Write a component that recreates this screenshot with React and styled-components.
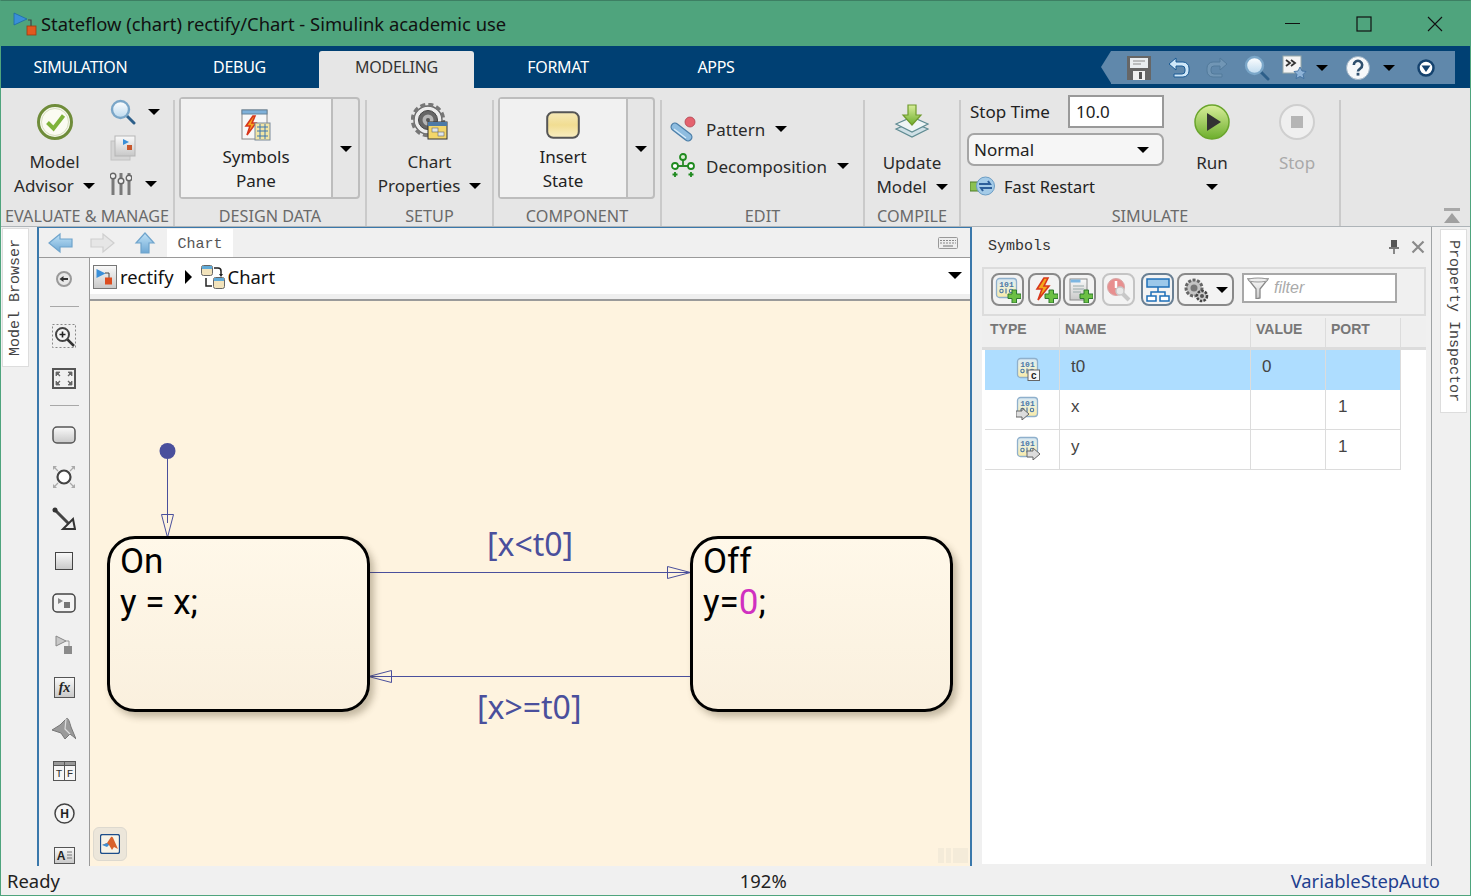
import React from 'react';
import styled, { createGlobalStyle } from 'styled-components';

const Global = createGlobalStyle`
  html, body { margin: 0; padding: 0; background: #f0f0f0; }
  * { box-sizing: border-box; }
  #root { width: 1471px; height: 896px; overflow: hidden; }
`;

const UI = `"Noto Sans", "Open Sans", sans-serif`;
const MONO = `"Liberation Mono", "DejaVu Sans Mono", monospace`;
const INK = '#4a4f9c';

const Win = styled.div`
  width: 1471px; height: 896px; display: flex; flex-direction: column;
  border: 1px solid #4fa47d; border-top-color: #3d7f63; background: #f0f0f0; font-family: ${UI}; color: #222; overflow: hidden;
`;
const TitleBar = styled.div`
  height: 45px; flex: none; background: #4fa47d; display: flex; align-items: center; padding-left: 12px;
`;
const TitleText = styled.div`
  margin-left: 4px; font-size: 18.4px; color: #111; white-space: nowrap; flex: 1;
`;
const WinButtons = styled.div`
  display: flex; align-items: center; gap: 55px; padding-right: 27px;
`;
const TabBar = styled.div`
  height: 42px; flex: none; background: #004073; display: flex; position: relative;
`;
const Tab = styled.div`
  width: ${p => p.$w}px; display: flex; align-items: center; justify-content: center;
  font-size: 16px; letter-spacing: -0.3px; color: ${p => (p.$active ? '#333' : '#fff')};
  background: ${p => (p.$active ? '#e6e6e6' : 'transparent')};
  margin-top: ${p => (p.$active ? 5 : 0)}px; padding-bottom: ${p => (p.$active ? 5 : 0)}px;
  border-radius: 3px 3px 0 0;
`;
const Quick = styled.div`
  position: absolute; left: 1110px; top: 5px; width: 344px; height: 33px; background: #6088ab;
  display: flex; align-items: center; padding-left: 16px;
  &::before {
    content: ''; position: absolute; left: -10px; top: 0; border-style: solid;
    border-width: 16.5px 10px 16.5px 0; border-color: transparent #6088ab transparent transparent;
  }
`;
const QuickSlot = styled.div`
  display: flex; align-items: center; margin-left: ${p => p.$ml || 0}px;
`;
const Ribbon = styled.div`
  height: 139px; flex: none; background: #e6e6e6; display: flex; border-bottom: 1px solid #aeb4b8;
`;
const Sep = styled.div`
  width: 2px; flex: none; margin-top: 12px; background: #cacaca;
`;
const Group = styled.div`
  width: ${p => p.$w}px; flex: none; display: flex; flex-direction: column;
`;
const GroupBody = styled.div`
  flex: 1; display: flex; min-height: 0;
`;
const GroupLabel = styled.div`
  height: 22px; flex: none; text-align: center; font-size: 16.2px; line-height: 25px; color: #6a6a6a; white-space: nowrap;
`;
const BigButton = styled.div`
  width: ${p => p.$w || 100}px; display: flex; flex-direction: column; align-items: center; padding-top: ${p => p.$pt || 16}px;
  margin-left: ${p => p.$ml || 0}px;
  color: ${p => (p.$off ? '#a9a9a9' : '#2a2a2a')};
`;
const IconSlot = styled.div`
  height: ${p => p.$h || 36}px; display: flex; align-items: center; justify-content: center; margin-bottom: ${p => p.$mb || 10}px;
`;
const BtnLine = styled.div`
  height: 24px; line-height: 24px; font-size: 17px; white-space: nowrap; display: flex; align-items: center; gap: ${p => p.$gap || 9}px;
`;
const Caret = styled.span`
  display: inline-block; flex: none; width: 0; height: 0; border-style: solid;
  border-width: 6px 6px 0 6px; border-color: #000 transparent transparent transparent;
`;
const BigCaret = styled(Caret)`
  border-width: 7px 7px 0 7px; margin-bottom: 3px;
`;
const SmallCol = styled.div`
  display: flex; flex-direction: column; padding: 11px 0 0 2px; gap: 11px;
`;
const SmallRow = styled.div`
  height: 25px; display: flex; align-items: center; gap: ${p => p.$gap || 12}px;
`;
const Split = styled.div`
  margin: 9px 0 0 4px; width: ${p => p.$w}px; height: 102px; border: 2px solid #bdbdbd; border-radius: 4px; display: flex;
`;
const SplitMain = styled.div`
  flex: 1; background: #f1f1f1; display: flex; flex-direction: column; align-items: center; padding-top: 11px;
`;
const SplitSide = styled.div`
  width: 27px; border-left: 2px solid #bdbdbd; display: flex; align-items: center; justify-content: center; padding-top: 2px;
`;
const EditCol = styled.div`
  display: flex; flex-direction: column; padding: 23px 0 0 8px; gap: 1px;
`;
const EditRow = styled.div`
  height: 36px; display: flex; align-items: center; font-size: 17px; gap: 10px; color: #2a2a2a;
`;
const SimLeft = styled.div`
  width: 203px; flex: none; padding: 7px 0 0 6px; display: flex; flex-direction: column;
`;
const StopRow = styled.div`
  display: flex; align-items: center; justify-content: space-between; height: 33px; padding-left: 3px; font-size: 17px;
`;
const StopInput = styled.div`
  width: 96px; height: 33px; background: #fff; border: 2px solid #999; font-size: 17px; line-height: 29px; padding-left: 6px;
`;
const ModeSelect = styled.div`
  margin-top: 5px; height: 33px; background: #f6f6f6; border: 2px solid #a5a5a5; border-radius: 7px; display: flex; align-items: center;
  justify-content: space-between; padding: 0 13px 0 5px; font-size: 17px;
`;
const FastRow = styled.div`
  margin-top: 7px; height: 26px; display: flex; align-items: center; padding-left: 3px; gap: 9px; font-size: 16.4px;
`;
const CollapseCell = styled.div`
  flex: 1; display: flex; justify-content: flex-end; align-items: flex-end; padding: 0 10px 2px 0;
`;

const Main = styled.div`
  flex: 1; min-height: 0; display: flex;
`;
const LeftStrip = styled.div`
  width: 36px; flex: none; background: #f0f0f0; padding: 1px 0 0 1px;
`;
const SideTab = styled.div`
  background: #fff; border: 1px solid #ddd; writing-mode: vertical-rl; font-family: ${MONO}; font-size: 15px; color: #444; white-space: nowrap;
  display: flex; align-items: center; justify-content: center;
  width: 27px; height: ${p => p.$h}px;
  ${p => (p.$flip ? 'transform: rotate(180deg);' : '')}
`;
const Editor = styled.div`
  width: 935px; flex: none; border: 2px solid #3a78ab; border-top-width: 1px; display: flex; flex-direction: column; height: 641px;
`;
const EditorTop = styled.div`
  height: 30px; flex: none; background: #f0f0f0; border-bottom: 1px solid #9a9a9a; display: flex; align-items: center; padding-left: 9px;
`;
const NavIcon = styled.div`
  width: ${p => p.$w}px; display: flex;
`;
const ChartTab = styled.div`
  height: 28px; width: 66px; margin-top: 1px; background: #fff; font-family: ${MONO}; font-size: 15px; color: #555; display: flex; align-items: center; justify-content: center; padding-top: 2px;
`;
const EditorBody = styled.div`
  flex: 1; min-height: 0; display: flex;
`;
const Palette = styled.div`
  width: 51px; flex: none; background: #f0f0f0; border-right: 1px solid #9a9a9a; overflow: hidden;
`;
const PalItem = styled.div`
  height: 42px; display: flex; align-items: center; justify-content: center;
`;
const PalDiv = styled.div`
  height: 1px; width: 29px; margin: 6px auto 8px; background: #a8a8a8;
`;
const ChartSide = styled.div`
  flex: 1; display: flex; flex-direction: column; min-width: 0;
`;
const Crumbs = styled.div`
  height: 43px; flex: none; background: #fff; border-bottom: 2px solid #9a9a9a; box-shadow: inset 0 -5px 0 #efefef; display: flex; align-items: center;
  padding: 0 8px 4px 3px; font-size: 18.4px; color: #111;
`;
const CrumbText = styled.span`
  margin: 0 ${p => p.$mr || 0}px 0 3px;
`;
const CrumbArrow = styled.span`
  width: 0; height: 0; border-style: solid; border-width: 7px 0 7px 7px; margin-right: 9px; border-color: transparent transparent transparent #000;
`;
const Spacer = styled.div` flex: 1; `;
const Canvas = styled.div`
  flex: 1; position: relative; background: #fef3df; overflow: hidden;
`;
const Wires = styled.svg`
  position: absolute; left: 0; top: 0; width: 100%; height: 100%;
`;
const State = styled.div`
  position: absolute; left: ${p => p.$x}px; top: ${p => p.$y}px; width: 263px; height: 176px;
  border: 3px solid #000; border-radius: 28px; background: linear-gradient(#fff8e9, #faf0de);
  box-shadow: 4px 5px 7px rgba(70, 60, 30, 0.32); padding: 0 0 0 10px;
  font-family: Roboto, "Noto Sans", sans-serif; font-size: 35px; line-height: 41px; color: #000;
`;
const StateTitle = styled.div` margin-top: 2px; `;
const Magenta = styled.span` color: #d030c0; `;
const Guard = styled.div`
  position: absolute; left: ${p => p.$x}px; top: ${p => p.$y}px; font-size: 32px; line-height: 44px; color: ${INK}; white-space: nowrap;
`;
const MlButton = styled.div`
  position: absolute; left: 3px; bottom: 5px; width: 34px; height: 34px; border-radius: 6px; background: #ece6da; border: 1px solid #ddd9cf;
  display: flex; align-items: center; justify-content: center;
`;
const ScrollHint = styled.div`
  position: absolute; right: 2px; bottom: 3px; display: flex; gap: 2px;
`;
const HintBar = styled.div`
  width: ${p => p.$w}px; height: 15px; background: #f4ebd9;
`;

const RightPanel = styled.div`
  width: 460px; flex: none; background: #f0f0f0; border-right: 1px solid #9fa3a5; display: flex; flex-direction: column; padding: 0 5px 2px 10px;
`;
const PanelHead = styled.div`
  height: 40px; flex: none; display: flex; align-items: center; padding: 0 1px 1px 6px; font-family: ${MONO}; font-size: 15px; color: #333;
`;
const PanelTitle = styled.div` flex: 1; `;
const PanelTools = styled.div` display: flex; align-items: center; gap: 12px; `;
const SymBar = styled.div`
  height: 49px; flex: none; border: 2px solid #dcdcdc; display: flex; align-items: flex-start; padding: 4px 0 0 7px;
`;
const SymBtn = styled.div`
  width: ${p => p.$w || 33}px; height: 33px; margin-left: ${p => p.$ml || 0}px; border: 2px solid ${p => p.$c || '#8a8a8a'}; border-radius: 8px; background: #f3f3f3;
  display: flex; align-items: center; justify-content: center; gap: 7px;
`;
const FilterBox = styled.div`
  width: 155px; height: 30px; margin-left: 8px; background: #fff; border: 2px solid #a8a8a8; display: flex; align-items: center; padding-left: 3px;
  font: italic 16px "Liberation Sans", sans-serif; color: #aaa; gap: 5px;
`;
const TableWrap = styled.div`
  flex: 1; min-height: 0; margin-top: 2px; background: #fff; display: flex; flex-direction: column;
`;
const HeadBand = styled.div`
  height: 32px; flex: none; background: #efefef; border-bottom: 3px solid #dcdcdc;
`;
const Row = styled.div`
  display: grid; grid-template-columns: 75px 191px 75px 75px; width: 416px; margin-left: 3px; height: ${p => p.$h || 40}px;
  background: ${p => (p.$sel ? '#aeddff' : 'transparent')};
  font: 17px/1 "Liberation Sans", sans-serif; color: #444;
`;
const Cell = styled.div`
  border-right: 1px solid #dcdcdc; border-bottom: ${p => (p.$sel ? 0 : 1)}px solid #dcdcdc; display: flex; align-items: center; padding-left: ${p => p.$pl || 0}px; padding-bottom: 7px;
`;
const IconCell = styled(Cell)`
  justify-content: center; padding: 0 0 3px 12px;
`;
const HeadCell = styled.div`
  border-right: 1px solid #dcdcdc; display: flex; align-items: center; padding: 0 0 7px 5px; font: bold 14px "Liberation Sans", sans-serif; color: #777;
`;
const RightStrip = styled.div`
  flex: 1; background: #f0f0f0; padding: 2px 0 0 8px;
`;
const Status = styled.div`
  height: 29px; flex: none; background: #f0f0f0; display: flex; align-items: center; font-size: 18.4px; color: #222; padding: 0 30px 0 6px;
`;
const StatusZoom = styled.div`
  margin-left: 680px;
`;
const StatusSolver = styled.div`
  margin-left: auto; color: #1f3f8f;
`;

const Svg = ({ w = 24, h, children }) => (
  <svg width={w} height={h || w} viewBox={`0 0 ${w} ${h || w}`} style={{ display: 'block', flex: 'none' }}>{children}</svg>
);

const Defs = () => (
  <svg width="0" height="0" style={{ position: 'absolute' }}>
    <defs>
      <linearGradient id="gGreen" x1="0" y1="0" x2="0" y2="1"><stop offset="0" stopColor="#d9ee9b" /><stop offset="1" stopColor="#6cae2c" /></linearGradient>
      <linearGradient id="gYellow" x1="0" y1="0" x2="0" y2="1"><stop offset="0" stopColor="#f6e9b8" /><stop offset="0.5" stopColor="#f1dd92" /><stop offset="1" stopColor="#f9eec2" /></linearGradient>
      <linearGradient id="gBlue" x1="0" y1="0" x2="0" y2="1"><stop offset="0" stopColor="#bfe2f7" /><stop offset="1" stopColor="#6fa8d4" /></linearGradient>
      <linearGradient id="gGray" x1="0" y1="0" x2="0" y2="1"><stop offset="0" stopColor="#fafafa" /><stop offset="1" stopColor="#c8c8c8" /></linearGradient>
      <linearGradient id="gGlass" x1="0" y1="0" x2="0" y2="1"><stop offset="0" stopColor="#ffffff" /><stop offset="1" stopColor="#bcd9ee" /></linearGradient>
      <linearGradient id="gData" x1="0" y1="0" x2="0" y2="1"><stop offset="0" stopColor="#d6e8f6" /><stop offset="0.45" stopColor="#eef0d8" /><stop offset="1" stopColor="#f8eaa8" /></linearGradient>
    </defs>
  </svg>
);

const SimulinkMini = () => (
  <Svg w={24}>
    <path d="M15 8h3v8" fill="none" stroke="#444" strokeWidth="1.2" />
    <path d="M1 1l13 6-13 6z" fill="#3a8fd8" stroke="#1e6aa8" strokeWidth="0.8" />
    <rect x="14" y="14" width="9" height="9" fill="#e2591f" stroke="#9c3a10" strokeWidth="0.8" />
  </Svg>
);
const Magnifier = ({ s = 26 }) => (
  <Svg w={26} h={26}>
    <path d="M16 16l8 8" stroke="#2d5f8a" strokeWidth="3" strokeLinecap="round" />
    <circle cx="10.500" cy="10.500" r="8.500" fill="url(#gGlass)" stroke="#7aa6c8" strokeWidth="2.400" />
  </Svg>
);
const CheckCircle = () => (
  <Svg w={36}>
    <circle cx="18" cy="18" r="16.500" fill="#f5f7ec" stroke="#6f8c3a" strokeWidth="3" />
    <circle cx="18" cy="18" r="13.500" fill="#fbfbf2" stroke="#d8dfc0" strokeWidth="1" />
    <path d="M10.500 18.500l6 6 10-13" fill="none" stroke="#7fb33a" strokeWidth="4" />
  </Svg>
);
const ModelDoc = () => (
  <Svg w={26}>
    <rect x="1" y="6" width="19" height="19" fill="#d5d5d5" stroke="#c2c2c2" />
    <rect x="5" y="1" width="20" height="20" fill="url(#gGray)" stroke="#b5b5b5" />
    <path d="M13 4l6 3-6 3z" fill="#3a8fd8" />
    <rect x="17" y="10" width="5" height="5" fill="#c8572c" />
  </Svg>
);
const Sliders = () => (
  <Svg w={22} h={24}>
    {[3, 11, 19].map((x, i) => (
      <g key={x}>
        <path d={`M${x} 1v22`} stroke="#7a7a7a" strokeWidth="3" />
        <circle cx={x} cy={[4, 9, 6][i]} r="2.800" fill="#f0f0f0" stroke="#666" strokeWidth="1.400" />
      </g>
    ))}
  </Svg>
);
const SymbolsIcon = () => (
  <Svg w={30} h={32}>
    <rect x="1" y="1" width="25" height="29" fill="#f7f7f7" stroke="#888" />
    <rect x="1" y="1" width="25" height="4" fill="#7fb1da" stroke="#66849c" />
    <path d="M12 7L5 17h4l-3 9 9-12h-4l3-7z" fill="#f5a51e" stroke="#d8351a" strokeWidth="1.600" />
    <rect x="14" y="14" width="15" height="17" fill="#f2e5a5" stroke="#7a8a9a" />
    <path d="M16 18h11M16 22h11M16 27h11M19 15v15M24 15v15" stroke="#3c76b0" strokeWidth="1" />
  </Svg>
);
const GearChart = () => (
  <Svg w={38}>
    <circle cx="17" cy="17" r="14" fill="#ececec" stroke="#666" strokeWidth="1.400" />
    <circle cx="17" cy="17" r="15.500" fill="none" stroke="#777" strokeWidth="3.500" strokeDasharray="5 3.100" />
    <circle cx="17" cy="17" r="9.500" fill="#666" stroke="#444" />
    <circle cx="17" cy="17" r="5.500" fill="#b5b5b5" />
    <circle cx="17" cy="17" r="2" fill="#555" />
    <rect x="17" y="19" width="19" height="17" fill="#f3d66a" stroke="#333" />
    <rect x="17" y="19" width="19" height="4" fill="#4d7aa6" />
    <rect x="21" y="25" width="6" height="4" fill="#dfe6ec" stroke="#666" strokeWidth="0.600" />
    <rect x="27" y="29" width="6" height="4" fill="#dfe6ec" stroke="#666" strokeWidth="0.600" />
  </Svg>
);
const StateIcon = () => (
  <Svg w={34} h={28}>
    <rect x="1.200" y="1.200" width="31.600" height="25.600" rx="6" fill="url(#gYellow)" stroke="#555" strokeWidth="2" />
  </Svg>
);
const PatternIcon = () => (
  <Svg w={26}>
    <path d="M5 11l13 10" stroke="#4d7fa8" strokeWidth="9" strokeLinecap="round" />
    <path d="M5 11l13 10" stroke="#8fbde0" strokeWidth="6.500" strokeLinecap="round" />
    <path d="M4 13l12 9" stroke="#d8ecfa" strokeWidth="1.200" />
    <circle cx="20" cy="6" r="5" fill="#e4626e" stroke="#b04450" strokeWidth="0.800" />
  </Svg>
);
const DecompIcon = () => (
  <Svg w={26}>
    <path d="M5 13h16M13 6v7" fill="none" stroke="#2a8a2a" strokeWidth="1.800" />
    <circle cx="13" cy="4" r="3" fill="#d8ecd0" stroke="#1f8a1f" strokeWidth="1.800" />
    <circle cx="5" cy="13" r="3" fill="#fff" stroke="#1f8a1f" strokeWidth="1.800" />
    <circle cx="21" cy="13" r="3" fill="#fff" stroke="#1f8a1f" strokeWidth="1.800" />
    <path d="M5 19v5M2.500 21.500h5M21 19v5M18.500 21.500h5" stroke="#1f8a1f" strokeWidth="1.800" />
  </Svg>
);
const UpdateIcon = () => (
  <Svg w={36}>
    <path d="M2 25l16-7 16 7-16 8z" fill="#cfe0e6" stroke="#5f8b92" strokeWidth="1.200" />
    <path d="M2 20l16-7 16 7-16 8z" fill="#eef5f6" stroke="#5f8b92" strokeWidth="1.200" />
    <path d="M14 1h8v10h5l-9 10-9-10h5z" fill="url(#gGreen)" stroke="#6f9a2c" strokeWidth="1.200" />
  </Svg>
);
const FastIcon = () => (
  <Svg w={25} h={20}>
    <rect x="0" y="6" width="9" height="9" fill="#8cc152" stroke="#4f7f2a" />
    <circle cx="15.500" cy="10" r="9" fill="#a4cbe8" stroke="#6a9cc4" />
    <path d="M9 8h11l-2-3M22 12H11l2 3" fill="none" stroke="#2d5f9a" strokeWidth="2" />
  </Svg>
);
const RunIcon = () => (
  <Svg w={36}>
    <circle cx="18" cy="18" r="17" fill="url(#gGreen)" stroke="#6aa52c" strokeWidth="1.500" />
    <path d="M13 9l14 9-14 9z" fill="#333" />
  </Svg>
);
const StopIcon = () => (
  <Svg w={36}>
    <circle cx="18" cy="18" r="17" fill="#efefef" stroke="#cfcfcf" strokeWidth="2" />
    <rect x="12" y="12" width="12" height="12" fill="#b5b5b5" />
  </Svg>
);
const CollapseIcon = () => (
  <Svg w={16} h={16}>
    <rect x="0" y="0" width="16" height="3" fill="#a8a8a8" />
    <path d="M8 5l8 10H0z" fill="#a0a0a0" />
  </Svg>
);
const SaveIcon = () => (
  <Svg w={24}>
    <path d="M0 0h24v24H0z" fill="#666" />
    <rect x="3" y="2" width="18" height="10" fill="#e9edf0" />
    <path d="M6 5h12M6 8h8" stroke="#8a8a8a" />
    <rect x="6" y="15" width="12" height="9" fill="#f2f2f2" />
    <rect x="12" y="16" width="3" height="7" fill="#555" />
  </Svg>
);
const UndoIcon = ({ flip, dim }) => (
  <Svg w={24}>
    <g transform={flip ? 'translate(24 0) scale(-1 1)' : undefined}>
      <path d="M2 8l7-6v4h7a6 6 0 0 1 6 6v3a6 6 0 0 1-6 6H7v-3h8a3 3 0 0 0 3-3v-2a3 3 0 0 0-3-3H9v4z" fill={dim ? '#7196b5' : '#cfe7f8'} stroke={dim ? '#527a9b' : '#1a5a94'} strokeWidth="1" />
    </g>
  </Svg>
);
const FavIcon = () => (
  <Svg w={26}>
    <rect x="1" y="1" width="18" height="17" fill="#f4f4f4" stroke="#9aa" />
    <path d="M4 5l4 3-4 3M9 5l4 3-4 3" fill="none" stroke="#333" strokeWidth="1.800" />
    <path d="M18 12l2 4 4 .5-3 3 1 4-4-2-4 2 1-4-3-3 4-.5z" fill="#8fb4d8" stroke="#3a6a9a" strokeWidth="0.800" />
  </Svg>
);
const HelpIcon = () => (
  <Svg w={24}>
    <circle cx="12" cy="12" r="11.500" fill="#f6f8fa" stroke="#9eb2c4" />
    <path d="M7.800 9a4.200 4.200 0 1 1 6.500 3.500c-1.400 1-2.300 1.600-2.300 3" fill="none" stroke="#30506e" strokeWidth="2.600" />
    <rect x="10.600" y="16.800" width="2.800" height="2.800" fill="#30506e" />
  </Svg>
);
const DownCircle = () => (
  <Svg w={18}>
    <circle cx="9" cy="9" r="7.500" fill="#fff" stroke="#14426e" strokeWidth="2.500" />
    <path d="M4.500 6.500h9L9 13z" fill="#14426e" />
  </Svg>
);
const NavArrow = ({ dir, off }) => (
  <Svg w={25} h={22}>
    <path d="M1 11L12 2v5h12v8H12v5z" transform={dir === 'right' ? 'translate(25 0) scale(-1 1)' : undefined} fill={off ? '#e6e6e6' : 'url(#gBlue)'} stroke={off ? '#cfcfcf' : '#6fa4cc'} strokeWidth="1.200" />
  </Svg>
);
const UpArrow = () => (
  <Svg w={22} h={22}>
    <path d="M11 1l9 10h-5v10H7V11H2z" fill="url(#gBlue)" stroke="#6fa4cc" strokeWidth="1.200" />
  </Svg>
);
const Keyboard = () => (
  <Svg w={20} h={12}>
    <rect x="0.500" y="0.500" width="19" height="11" rx="1" fill="#eee" stroke="#999" />
    <path d="M2 3.500h16M2 6h16" stroke="#888" strokeWidth="1.200" strokeDasharray="2 1" />
    <path d="M5 9h10" stroke="#888" strokeWidth="1.200" />
  </Svg>
);
const BackCircle = () => (
  <Svg w={16}>
    <circle cx="8" cy="8" r="7" fill="#e8e8e8" stroke="#9a9a9a" strokeWidth="2" />
    <path d="M3.500 8l4-3v2h4.500v2H7.500v2z" fill="#333" />
  </Svg>
);
const ZoomArea = () => (
  <Svg w={24}>
    <rect x="0.500" y="0.500" width="23" height="23" fill="none" stroke="#888" strokeDasharray="2 2" />
    <path d="M15 15l7 7" stroke="#333" strokeWidth="2.500" />
    <circle cx="10.500" cy="10.500" r="6.500" fill="#f6f6f6" stroke="#444" strokeWidth="2" />
    <path d="M7.500 10.500h6M10.500 7.500v6" stroke="#222" strokeWidth="1.600" />
  </Svg>
);
const FitIcon = () => (
  <Svg w={24} h={21}>
    <rect x="1" y="1" width="22" height="19" fill="#f0f0f0" stroke="#555" strokeWidth="2" />
    <path d="M4 4h4L4 8zM20 4h-4l4 4zM4 17h4l-4-4zM20 17h-4l4-4z" fill="#666" stroke="#666" strokeWidth="0.800" />
    <path d="M5 5l3 3M19 5l-3 3M5 16l3-3M19 16l-3-3" stroke="#666" strokeWidth="1.400" />
  </Svg>
);
const StatePal = () => (
  <Svg w={24} h={18}>
    <rect x="1" y="1" width="22" height="16" rx="4" fill="url(#gGray)" stroke="#555" strokeWidth="1.500" />
  </Svg>
);
const JunctionPal = () => (
  <Svg w={24}>
    <circle cx="12" cy="12" r="6.500" fill="#fff" stroke="#444" strokeWidth="2.200" />
    <path d="M1 1h4L1 5zM23 1h-4l4 4zM1 23h4l-4-4zM23 23h-4l4-4z" fill="#aaa" />
    <path d="M2 2l4 4M22 2l-4 4M2 22l4-4M22 22l-4-4" stroke="#aaa" strokeWidth="1.200" />
  </Svg>
);
const TransPal = () => (
  <Svg w={24}>
    <path d="M3 3l14 14" stroke="#444" strokeWidth="3" />
    <circle cx="3" cy="3" r="2.500" fill="#333" />
    <path d="M23 22H11l10-10z" fill="#eee" stroke="#333" strokeWidth="2" />
  </Svg>
);
const BoxPal = () => (
  <Svg w={18}>
    <rect x="0.500" y="0.500" width="17" height="17" fill="url(#gGray)" stroke="#444" />
  </Svg>
);
const SubPal = () => (
  <Svg w={24} h={20}>
    <rect x="1" y="1" width="22" height="18" rx="4" fill="#f4f4f4" stroke="#444" strokeWidth="1.500" />
    <path d="M6 5l5 3-5 3z" fill="#888" />
    <rect x="12" y="9" width="6" height="6" fill="#777" />
  </Svg>
);
const SimPal = () => (
  <Svg w={20}>
    <path d="M2 1l10 5-10 5z" fill="#c8c8c8" stroke="#888" />
    <path d="M12 6h3v6" fill="none" stroke="#999" />
    <rect x="10" y="11" width="8" height="8" fill="#8a8a8a" />
  </Svg>
);
const FxPal = () => (
  <Svg w={21}>
    <rect x="0.500" y="0.500" width="20" height="20" fill="url(#gGray)" stroke="#555" />
    <text x="10.500" y="15" textAnchor="middle" fontFamily="Liberation Serif" fontStyle="italic" fontWeight="bold" fontSize="14" fill="#222">fx</text>
  </Svg>
);
const MlPal = () => (
  <Svg w={24}>
    <path d="M0 13l8-5 6-6c2-2 3 1 5 8l5 12c-3-3-5-4-6-5l-5 5-4-6z" fill="#9a9a9a" stroke="#777" />
    <path d="M14 2l-1 10 5 5" fill="none" stroke="#dcdcdc" strokeWidth="1.200" />
  </Svg>
);
const TfPal = () => (
  <Svg w={23} h={20}>
    <rect x="0.500" y="0.500" width="22" height="19" fill="#f6f6f6" stroke="#555" />
    <rect x="0.500" y="0.500" width="22" height="4" fill="#999" stroke="#555" />
    <path d="M11.500 0v20" stroke="#555" />
    <text x="6" y="16" textAnchor="middle" fontFamily="Liberation Mono" fontSize="11" fill="#333">T</text>
    <text x="17" y="16" textAnchor="middle" fontFamily="Liberation Mono" fontSize="11" fill="#333">F</text>
  </Svg>
);
const HPal = () => (
  <Svg w={21}>
    <circle cx="10.500" cy="10.500" r="9.500" fill="#f6f6f6" stroke="#444" strokeWidth="1.500" />
    <text x="10.500" y="15" textAnchor="middle" fontFamily="Liberation Sans" fontWeight="bold" fontSize="12" fill="#222">H</text>
  </Svg>
);
const TextPal = () => (
  <Svg w={21} h={17}>
    <rect x="0.500" y="0.500" width="20" height="16" fill="url(#gGray)" stroke="#555" />
    <text x="7" y="13" textAnchor="middle" fontFamily="Liberation Sans" fontWeight="bold" fontSize="12" fill="#222">A</text>
    <path d="M13 5h5M13 8h5M13 11h5" stroke="#777" />
  </Svg>
);
const MembraneBtn = () => (
  <Svg w={20}>
    <rect x="0.500" y="0.500" width="19" height="19" rx="2" fill="#f8f3e6" stroke="#1c4d8a" strokeWidth="1.300" />
    <path d="M2 11l5-2 4-6c1-1 2 0 3 3l4 9-4-2-2 3-3-5z" fill="#d9622b" />
    <path d="M2 11l5-2 2 2-2 2z" fill="#3f8fd2" />
  </Svg>
);
const Crumb = () => (
  <Svg w={24}>
    <rect x="0.500" y="0.500" width="23" height="23" fill="url(#gGray)" stroke="#777" />
    <path d="M3.500 4l9 4.500-9 4.500z" fill="#3a8fd8" />
    <path d="M12 8h4v5" fill="none" stroke="#444" />
    <rect x="12" y="12.500" width="7" height="7" fill="#dc4d20" />
  </Svg>
);
const ChartCrumb = () => (
  <Svg w={24}>
    <rect x="0.500" y="0.500" width="11" height="10" rx="2" fill="#f2e3bb" stroke="#666" />
    <rect x="1" y="1" width="10" height="3" fill="#5faad8" />
    <rect x="12.500" y="12.500" width="11" height="11" rx="2" fill="#f2e3bb" stroke="#666" />
    <rect x="13" y="13" width="10" height="3" fill="#5faad8" />
    <path d="M13 3h4a3 3 0 0 1 3 3v4M5 13v8h6" fill="none" stroke="#222" strokeWidth="1.500" />
    <path d="M18 9l2 3 2-3z" fill="#222" />
  </Svg>
);
const Pin = () => (
  <Svg w={10} h={14}>
    <rect x="2" y="0" width="6" height="8" fill="#555" />
    <rect x="0" y="7" width="10" height="2" fill="#777" />
    <path d="M5 9v5" stroke="#666" strokeWidth="1.500" />
  </Svg>
);
const CloseX = () => (
  <Svg w={14}>
    <path d="M1.500 1.500l11 11M12.500 1.500l-11 11" stroke="#8a8a8a" strokeWidth="2.200" />
  </Svg>
);
const DataBase = () => (
  <>
    <rect x="1.500" y="1.500" width="20" height="19" rx="3" fill="url(#gData)" stroke="#8fb0cc" strokeWidth="1.300" />
    <text x="11.500" y="9.500" textAnchor="middle" fontFamily="Liberation Mono" fontSize="8" fontWeight="bold" fill="#4a78a8">101</text>
    <circle cx="6.500" cy="14" r="1.700" fill="none" stroke="#4a78a8" strokeWidth="1.100" />
    <path d="M11 11.500v5" stroke="#4a78a8" strokeWidth="1.200" />
    <circle cx="16" cy="14" r="1.700" fill="none" stroke="#4a78a8" strokeWidth="1.100" />
  </>
);
const Plus = () => (
  <path d="M17 13h4.500v4H26v4.500h-4.500V26H17v-4.500h-4V17h4z" fill="#6cc044" stroke="#2f7a2f" strokeWidth="1" />
);
const AddData = () => (<Svg w={26}><DataBase /><Plus /></Svg>);
const AddEvent = () => (
  <Svg w={26}>
    <path d="M12 1L5 12h5l-4 11 11-14h-5l4-8z" fill="#f6a81c" stroke="#d8381c" strokeWidth="1.600" />
    <Plus />
  </Svg>
);
const AddMsg = () => (
  <Svg w={26}>
    <rect x="3" y="2" width="17" height="21" fill="url(#gGray)" stroke="#8a8a8a" />
    <rect x="3.500" y="2.500" width="10" height="3" fill="#7cb6e2" />
    <path d="M6 9h11M6 12h11M6 15h8" stroke="#9aa" />
    <Plus />
  </Svg>
);
const Resolve = () => (
  <Svg w={26}>
    <circle cx="10" cy="10" r="8.500" fill="#e88f8f" stroke="#d8a8a8" />
    <path d="M10 4v7" stroke="#fff" strokeWidth="2.500" />
    <path d="M15 15l8 8" stroke="#c8c8c8" strokeWidth="4" />
    <circle cx="14" cy="14" r="4" fill="#e8e8e8" stroke="#c8c8c8" strokeWidth="1.500" />
  </Svg>
);
const Hier = () => (
  <Svg w={26}>
    <rect x="2" y="2" width="22" height="8" fill="#9cc8ea" stroke="#1e6fb8" strokeWidth="1.500" />
    <path d="M13 10v5M6 19v-4h14v4" fill="none" stroke="#1e6fb8" strokeWidth="1.500" />
    <rect x="2" y="19" width="9" height="5" fill="#fff" stroke="#1e6fb8" strokeWidth="1.500" />
    <rect x="15" y="19" width="9" height="5" fill="#fff" stroke="#1e6fb8" strokeWidth="1.500" />
  </Svg>
);
const Gears = () => (
  <Svg w={26}>
    <circle cx="11" cy="11" r="8" fill="#c4c4c4" stroke="#666" strokeWidth="3" strokeDasharray="3 1.500" />
    <circle cx="11" cy="11" r="3.500" fill="#777" />
    <circle cx="19" cy="19" r="5" fill="#ccc" stroke="#444" strokeWidth="2.500" strokeDasharray="2.500 1.200" />
    <circle cx="19" cy="19" r="2" fill="#555" />
  </Svg>
);
const Funnel = () => (
  <Svg w={22}>
    <path d="M1 2h20L13 12v9l-4 1V12z" fill="url(#gGray)" stroke="#888" strokeWidth="1.300" />
    <ellipse cx="11" cy="3" rx="10" ry="2" fill="#eee" stroke="#999" />
  </Svg>
);
const RowIcon = ({ kind }) => (
  <Svg w={24}>
    <DataBase />
    {kind === 'c' && (
      <>
        <rect x="12" y="13" width="11.500" height="10.500" fill="#f6f6f6" stroke="#666" />
        <text x="17.700" y="21.500" textAnchor="middle" fontFamily="Liberation Sans" fontWeight="bold" fontSize="10" fill="#222">c</text>
      </>
    )}
    {kind === 'in' && <path d="M0 15h6v-3l7 6-7 6v-3H0z" fill="#ddd" stroke="#666" />}
    {kind === 'out' && <path d="M11 15h6v-3l7 6-7 6v-3h-6z" fill="#ddd" stroke="#666" />}
  </Svg>
);

const rows = [
  { k: 'c', n: 't0', v: '0', p: '', sel: true },
  { k: 'in', n: 'x', v: '', p: '1' },
  { k: 'out', n: 'y', v: '', p: '1' },
];

const palette1 = [<ZoomArea />, <FitIcon />];
const palette2 = [<StatePal />, <JunctionPal />, <TransPal />, <BoxPal />, <SubPal />, <SimPal />, <FxPal />, <MlPal />, <TfPal />, <HPal />, <TextPal />];

export default function App() {
  return (
    <Win>
      <Global />
      <Defs />
      <TitleBar>
        <SimulinkMini />
        <TitleText>Stateflow (chart) rectify/Chart - Simulink academic use</TitleText>
        <WinButtons>
          <Svg w={17} h={17}><path d="M1 8.500h15" stroke="#111" /></Svg>
          <Svg w={16} h={16}><rect x="1" y="1" width="14" height="14" fill="none" stroke="#111" strokeWidth="1.200" /></Svg>
          <Svg w={16} h={16}><path d="M1 1l14 14M15 1L1 15" stroke="#111" strokeWidth="1.100" /></Svg>
        </WinButtons>
      </TitleBar>
      <TabBar>
        <Tab $w={159}>SIMULATION</Tab>
        <Tab $w={159}>DEBUG</Tab>
        <Tab $w={155} $active>MODELING</Tab>
        <Tab $w={168}>FORMAT</Tab>
        <Tab $w={148}>APPS</Tab>
        <Quick>
          <SaveIcon />
          <QuickSlot $ml={16}><UndoIcon /></QuickSlot>
          <QuickSlot $ml={14}><UndoIcon flip dim /></QuickSlot>
          <QuickSlot $ml={15}><Magnifier /></QuickSlot>
          <QuickSlot $ml={12}><FavIcon /></QuickSlot>
          <QuickSlot $ml={8}><Caret /></QuickSlot>
          <QuickSlot $ml={18}><HelpIcon /></QuickSlot>
          <QuickSlot $ml={13}><Caret /></QuickSlot>
          <QuickSlot $ml={22}><DownCircle /></QuickSlot>
        </Quick>
      </TabBar>
      <Ribbon>
        <Group $w={172}>
          <GroupBody>
            <BigButton $w={107}>
              <IconSlot><CheckCircle /></IconSlot>
              <BtnLine>Model</BtnLine>
              <BtnLine>Advisor<Caret /></BtnLine>
            </BigButton>
            <SmallCol>
              <SmallRow $gap={12}><Magnifier /><Caret /></SmallRow>
              <SmallRow><ModelDoc /></SmallRow>
              <SmallRow $gap={13}><Sliders /><Caret /></SmallRow>
            </SmallCol>
          </GroupBody>
          <GroupLabel>EVALUATE &amp; MANAGE</GroupLabel>
        </Group>
        <Sep />
        <Group $w={190}>
          <GroupBody>
            <Split $w={181}>
              <SplitMain>
                <IconSlot $h={30} $mb={5}><SymbolsIcon /></IconSlot>
                <BtnLine>Symbols</BtnLine>
                <BtnLine>Pane</BtnLine>
              </SplitMain>
              <SplitSide><Caret /></SplitSide>
            </Split>
          </GroupBody>
          <GroupLabel>DESIGN DATA</GroupLabel>
        </Group>
        <Sep />
        <Group $w={125}>
          <GroupBody>
            <BigButton $w={125} $pt={15}>
              <IconSlot $h={38} $mb={9}><GearChart /></IconSlot>
              <BtnLine>Chart</BtnLine>
              <BtnLine>Properties<Caret /></BtnLine>
            </BigButton>
          </GroupBody>
          <GroupLabel>SETUP</GroupLabel>
        </Group>
        <Sep />
        <Group $w={166}>
          <GroupBody>
            <Split $w={157}>
              <SplitMain>
                <IconSlot $h={30} $mb={5}><StateIcon /></IconSlot>
                <BtnLine>Insert</BtnLine>
                <BtnLine>State</BtnLine>
              </SplitMain>
              <SplitSide><Caret /></SplitSide>
            </Split>
          </GroupBody>
          <GroupLabel>COMPONENT</GroupLabel>
        </Group>
        <Sep />
        <Group $w={201}>
          <GroupBody>
            <EditCol>
              <EditRow><PatternIcon />Pattern<Caret /></EditRow>
              <EditRow><DecompIcon />Decomposition<Caret /></EditRow>
            </EditCol>
          </GroupBody>
          <GroupLabel>EDIT</GroupLabel>
        </Group>
        <Sep />
        <Group $w={94}>
          <GroupBody>
            <BigButton $w={94} $pt={15}>
              <IconSlot $h={38} $mb={10}><UpdateIcon /></IconSlot>
              <BtnLine>Update</BtnLine>
              <BtnLine>Model<Caret /></BtnLine>
            </BigButton>
          </GroupBody>
          <GroupLabel>COMPILE</GroupLabel>
        </Group>
        <Sep />
        <Group $w={378}>
          <GroupBody>
            <SimLeft>
              <StopRow>Stop Time<StopInput>10.0</StopInput></StopRow>
              <ModeSelect>Normal<Caret /></ModeSelect>
              <FastRow><FastIcon />Fast Restart</FastRow>
            </SimLeft>
            <BigButton $w={60} $ml={18}>
              <IconSlot $mb={11}><RunIcon /></IconSlot>
              <BtnLine>Run</BtnLine>
              <BtnLine><Caret /></BtnLine>
            </BigButton>
            <BigButton $w={60} $ml={25} $off>
              <IconSlot $mb={11}><StopIcon /></IconSlot>
              <BtnLine>Stop</BtnLine>
            </BigButton>
          </GroupBody>
          <GroupLabel>SIMULATE</GroupLabel>
        </Group>
        <Sep />
        <CollapseCell><CollapseIcon /></CollapseCell>
      </Ribbon>
      <Main>
        <LeftStrip>
          <SideTab $flip $h={139}>Model Browser</SideTab>
        </LeftStrip>
        <Editor>
          <EditorTop>
            <NavIcon $w={42}><NavArrow /></NavIcon>
            <NavIcon $w={44}><NavArrow dir="right" off /></NavIcon>
            <NavIcon $w={33}><UpArrow /></NavIcon>
            <ChartTab>Chart</ChartTab>
            <Spacer />
            <NavIcon $w={32}><Keyboard /></NavIcon>
          </EditorTop>
          <EditorBody>
            <Palette>
              <PalItem><BackCircle /></PalItem>
              <PalDiv />
              {palette1.map((ic, i) => <PalItem key={i}>{ic}</PalItem>)}
              <PalDiv />
              {palette2.map((ic, i) => <PalItem key={i}>{ic}</PalItem>)}
            </Palette>
            <ChartSide>
              <Crumbs>
                <Crumb />
                <CrumbText $mr={11}>rectify</CrumbText>
                <CrumbArrow />
                <ChartCrumb />
                <CrumbText>Chart</CrumbText>
                <Spacer />
                <BigCaret />
              </Crumbs>
              <Canvas>
                <Wires>
                  <g fill="none" stroke={INK} strokeWidth="1">
                    <path d="M77.500 158v64" />
                    <path d="M71.500 213.500h12l-6 23z" />
                    <path d="M280 271.500h321" />
                    <path d="M577.500 265.500v12l23-6z" />
                    <path d="M601 375.500H280" />
                    <path d="M301.500 369.500v12l-23-6z" />
                  </g>
                  <circle cx="77.500" cy="150" r="8" fill={INK} />
                </Wires>
                <State $x={17} $y={235}>
                  <StateTitle>On</StateTitle>
                  <div>y = x;</div>
                </State>
                <State $x={600} $y={235}>
                  <StateTitle>Off</StateTitle>
                  <div>y=<Magenta>0</Magenta>;</div>
                </State>
                <Guard $x={397} $y={221}>[x&lt;t0]</Guard>
                <Guard $x={387} $y={384}>[x&gt;=t0]</Guard>
                <MlButton><MembraneBtn /></MlButton>
                <ScrollHint><HintBar $w={6} /><HintBar $w={5} /><HintBar $w={15} /></ScrollHint>
              </Canvas>
            </ChartSide>
          </EditorBody>
        </Editor>
        <RightPanel>
          <PanelHead>
            <PanelTitle>Symbols</PanelTitle>
            <PanelTools><Pin /><CloseX /></PanelTools>
          </PanelHead>
          <SymBar>
            <SymBtn><AddData /></SymBtn>
            <SymBtn $ml={4}><AddEvent /></SymBtn>
            <SymBtn $ml={2}><AddMsg /></SymBtn>
            <SymBtn $ml={6} $c="#c4c4c4"><Resolve /></SymBtn>
            <SymBtn $ml={6} $c="#6a8094"><Hier /></SymBtn>
            <SymBtn $ml={3} $w={57}><Gears /><Caret /></SymBtn>
            <FilterBox><Funnel />filter</FilterBox>
          </SymBar>
          <TableWrap>
            <HeadBand>
              <Row $h={29}>
                <HeadCell>TYPE</HeadCell>
                <HeadCell>NAME</HeadCell>
                <HeadCell>VALUE</HeadCell>
                <HeadCell>PORT</HeadCell>
              </Row>
            </HeadBand>
            {rows.map(r => (
              <Row key={r.n} $sel={r.sel}>
                <IconCell $sel={r.sel}><RowIcon kind={r.k} /></IconCell>
                <Cell $pl={11} $sel={r.sel}>{r.n}</Cell>
                <Cell $pl={11} $sel={r.sel}>{r.v}</Cell>
                <Cell $pl={12} $sel={r.sel}>{r.p}</Cell>
              </Row>
            ))}
          </TableWrap>
        </RightPanel>
        <RightStrip>
          <SideTab $h={184}>Property Inspector</SideTab>
        </RightStrip>
      </Main>
      <Status>
        Ready
        <StatusZoom>192%</StatusZoom>
        <StatusSolver>VariableStepAuto</StatusSolver>
      </Status>
    </Win>
  );
}
